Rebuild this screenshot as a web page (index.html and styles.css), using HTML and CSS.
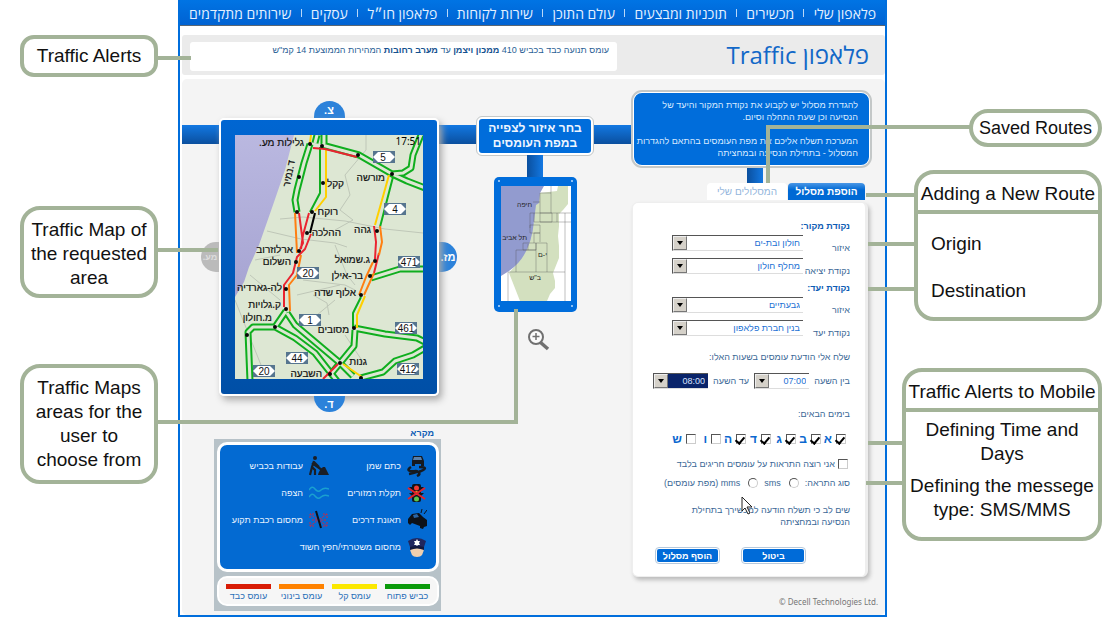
FILE: index.html
```html
<!DOCTYPE html>
<html lang="he">
<head>
<meta charset="utf-8">
<title>פלאפון Traffic</title>
<link rel="stylesheet" href="styles.css">
</head>
<body>
<div class="sheet">
  <aside class="notes notes-left" lang="en">
    <div class="note note-alerts">Traffic Alerts<i class="wire wire-alerts"></i></div>
    <div class="note note-map">Traffic Map of the requested area<i class="wire wire-map"></i></div>
    <div class="note note-areas">Traffic Maps areas for the user to choose from<i class="wire wire-areas"></i></div>
  </aside>

  <div class="app" dir="rtl">
    <nav class="nav">
      <a href="#">פלאפון שלי</a><i></i>
      <a href="#">מכשירים</a><i></i>
      <a href="#">תוכניות ומבצעים</a><i></i>
      <a href="#">עולם התוכן</a><i></i>
      <a href="#">שירות לקוחות</a><i></i>
      <a href="#">פלאפון חו״ל</a><i></i>
      <a href="#">עסקים</a><i></i>
      <a href="#">שירותים מתקדמים</a>
    </nav>
    <header class="titlebar">
      <h1>פלאפון Traffic</h1>
      <p class="ticker">עומס תנועה כבד בכביש 410 <b>ממכון ויצמן</b> עד <b>מערב רחובות</b> המהירות הממוצעת 14 קמ"ש</p>
    </header>

    <main class="panel">
      <section class="route-col">
        <div class="info-sign">
          <p>להגדרת מסלול יש לקבוע את נקודת המקור והיעד של<br>הנסיעה וכן שעת התחלה וסיום.</p>
          <p>המערכת תשלח אליכם את מפת העומסים בהתאם להגדרות<br>המסלול - בתחילת הנסיעה ובמחציתה</p>
        </div>
        <div class="post post-short"></div>
        <div class="tabs">
          <button type="button" class="tab tab-on">הוספת מסלול</button>
          <button type="button" class="tab">המסלולים שלי</button>
        </div>
        <form class="form">
          <h2>נקודת מקור:</h2>
          <div class="field"><label for="area1">איזור</label><span class="combo"><select id="area1"><option>חולון ובת-ים</option></select><i></i></span></div>
          <div class="field"><label for="exit">נקודת יציאה</label><span class="combo"><select id="exit"><option>מחלף חולון</option></select><i></i></span></div>
          <h2>נקודת יעד:</h2>
          <div class="field"><label for="area2">איזור</label><span class="combo"><select id="area2"><option>גבעתיים</option></select><i></i></span></div>
          <div class="field"><label for="dest">נקודת יעד</label><span class="combo"><select id="dest"><option>בנין חברת פלאפון</option></select><i></i></span></div>
          <p class="hint">שלח אלי הודעת עומסים בשעות האלו:</p>
          <div class="hours">
            <label for="from">בין השעה</label><span class="combo"><select id="from"><option>07:00</option></select><i></i></span>
            <label for="to">עד השעה</label><span class="combo combo-active"><select id="to"><option>08:00</option></select><i></i></span>
          </div>
          <p class="hint">בימים הבאים:</p>
          <div class="days">
            <label><input type="checkbox" checked>א</label>
            <label><input type="checkbox" checked>ב</label>
            <label><input type="checkbox" checked>ג</label>
            <label><input type="checkbox" checked>ד</label>
            <label><input type="checkbox" checked>ה</label>
            <label><input type="checkbox">ו</label>
            <label><input type="checkbox">ש</label>
          </div>
          <label class="only"><input type="checkbox">אני רוצה התראות על עומסים חריגים בלבד</label>
          <div class="kind">
            <span>סוג התראה:</span>
            <label><input type="radio" name="kind">sms</label>
            <label><input type="radio" name="kind">mms (מפת עומסים)</label>
          </div>
          <p class="remark">שים לב כי תשלח הודעה למכשירך בתחילת הנסיעה ובמחציתה</p>
          <div class="actions">
            <button type="button">ביטול</button>
            <button type="button">הוסף מסלול</button>
          </div>
          <svg class="pointer" viewBox="0 0 12 20" aria-hidden="true"><path d="M1 1v14l3-3 3 6 2-1-3-6h5z" fill="#fff" stroke="#222"/></svg>
        </form>
        <p class="copy" dir="ltr">© Decell Technologies Ltd.</p>
      </section>

      <section class="region-col">
        <h2 class="region-sign">בחר איזור לצפייה<br>במפת העומסים</h2>
        <div class="post"></div>
        <div class="region">
          <svg viewBox="0 0 70 115" role="img" aria-label="מפת איזורים">
            <rect width="70" height="115" fill="#fff"/>
            <path d="M39 7L56 5 57 0H67V18L62 24 58 28V40L57 50 58 60V72L52 87 54 95 54 102 49 108 46 115H19L8 87Q33 60 34 20Z" fill="#d3e0bf"/>
            <path d="M0 0H43L39 7 38 17 35 19 33 35Q30 70 8 85L0 90Z" fill="#929bcf"/>
            <path d="M50 0V7M39 7H50M39 7V27M50 7V27M32 16H39M29 27H70M29 27V42M33 27V36H70M39 27H51V36H39ZM56 27V36M29 39H39V47H29ZM33 47H39V56M22 57H35V64H22ZM15 64H35M15 64V86M33 47V57M35 57H46V86M35 57V86M7 86H64M64 27V115M7 86V115M27 64V58" fill="none" stroke="#555" stroke-opacity=".38"/>
            <g class="region-text"><text x="31" y="21">חיפה</text><text x="26" y="54">תל אביב</text><text x="46" y="71">י-ם</text><text x="40" y="94">ב"ש</text></g>
          </svg>
          <i class="screw s1"></i><i class="screw s2"></i><i class="screw s3"></i><i class="screw s4"></i>
        </div>
        <button type="button" class="zoom" aria-label="הגדלה"><svg viewBox="0 0 24 24"><circle cx="9" cy="9" r="7" fill="#fff" fill-opacity=".6" stroke="#707070" stroke-width="2"/><path d="M9 5v7M5.500 8.500h7" stroke="#707070" stroke-width="1.500"/><path d="M13 14l8 7" stroke="#707070" stroke-width="3.500"/></svg></button>
      </section>

      <section class="map-col">
        <button type="button" class="dir dir-n">צ.</button>
        <div class="map-row">
          <button type="button" class="dir dir-e">מז.</button>
          <div class="map-frame">
            <svg viewBox="0 0 188 244" role="img" aria-label="מפת עומסים">
              <defs><linearGradient id="sea" x2="0" y2="1"><stop stop-color="#bab8e0"/><stop offset="1" stop-color="#a6a4d2"/></linearGradient></defs>
              <rect width="188" height="244" fill="#dde7d3"/>
              <path d="M0 0H59L50 35 38 70 24 110 14 132 9 147 0 162Z" fill="url(#sea)"/>
              <path d="M131 0V15L110 40 115 60 105 75 118 85 100 95M45 84L68 82 110 86 150 94 188 98M32 96L66 104 100 108 112 112M20 125L45 120M15 140L45 165M68 145L110 150 120 155M100 110L112 140 120 150M62 160L105 150M78 160L92 168 94 180M0 165L30 240M110 200L130 230M70 190L100 165" fill="none" stroke="#bfc7b8"/>
              <g class="road">
                <path id="r1" d="M89 0V9M87 10L124 20 157 39 168 38 176 33 178 20 186 0M157 39L172 46 190 53M75 9L69 28 62 55 60 65 62 77M136 143L165 134H190M119 193L150 199 182 203 190 207M120 195L119 211 105 228 96 239M126 243L148 237 160 226 178 220 190 213M51 176L40 192 18 192 13 197 15 246M52 178L60 190 105 228 118 241M40 192L60 203 80 218 102 246M82 0L80 8"/>
              </g>
              <g class="road-in"><use href="#r1"/></g>
              <g class="lane">
                <path class="g" d="M85 12V58L75 77M158 42L145 92M126 162L118 178V193"/>
                <path class="y" d="M76 0L75 8M91 14V62L80 76M154 40L140 90M130 161L122 180V193M108 229L127 242"/>
                <path class="r" d="M78 13L90 14 122 22M64 78L68 108 65 114M74 78L68 100 66 114M76 99L70 114 62 122 58 138 49 150V172M139 91L141 107 140 124M103 229L88 244M144 118L139 138"/>
                <path class="o" d="M60 78L62 118M66 120L62 140 54 150 55 176M145 91L147 107 144 120M138 127L131 142 124 160M139 138L129 160"/>
                <path class="k" d="M80 78L75 98"/>
              </g>
              <g fill="#080808"><circle cx="75" cy="9" r="2"/><circle cx="87" cy="11" r="2"/><circle cx="123" cy="20" r="2"/><circle cx="157" cy="39" r="2"/><circle cx="64" cy="42" r="2"/><circle cx="88" cy="48" r="2"/><circle cx="62" cy="77" r="2"/><circle cx="77" cy="77" r="2"/><circle cx="72" cy="98" r="2"/><circle cx="64" cy="116" r="2"/><circle cx="142" cy="96" r="2"/><circle cx="61" cy="127" r="2"/><circle cx="51" cy="154" r="2"/><circle cx="51" cy="174" r="2"/><circle cx="40" cy="192" r="2"/><circle cx="12" cy="200" r="2"/><circle cx="140" cy="126" r="2"/><circle cx="135" cy="141" r="2"/><circle cx="126" cy="160" r="2"/><circle cx="119" cy="193" r="2"/><circle cx="105" cy="228" r="2"/><circle cx="95" cy="239" r="2"/><circle cx="126" cy="243" r="2"/></g>
              <defs><g id="shield"><rect x="-11" y="-6" width="22" height="12" fill="#56758f"/><path d="M-11 0L-6-5H6L11 0 6 5H-6Z" fill="#fff"/></g></defs>
              <g class="shields">
                <use href="#shield" x="149" y="22"/><text x="148" y="26">5</text>
                <use href="#shield" x="160" y="74"/><text x="160" y="78">4</text>
                <use href="#shield" x="174" y="127"/><text x="174" y="131">471</text>
                <use href="#shield" x="73" y="138"/><text x="73" y="142">20</text>
                <use href="#shield" x="75" y="185"/><text x="75" y="189">1</text>
                <use href="#shield" x="171" y="193"/><text x="171" y="197">461</text>
                <use href="#shield" x="62" y="223"/><text x="62" y="227">44</text>
                <use href="#shield" x="29" y="236"/><text x="29" y="240">20</text>
                <use href="#shield" x="173" y="234"/><text x="173" y="238">412</text>
              </g>
              <text class="clock" x="186" y="10">17:51</text>
              <g class="places">
                <text x="69" y="11">גלילות מע.</text><text transform="translate(60 26) rotate(-78)" x="0" y="0">ד.נמיר</text>
                <text x="109" y="52">קקל</text><text x="150" y="46">מורשה</text><text x="103" y="80">רוקח</text><text x="106" y="101">ההלכה</text><text x="136" y="98">גהה</text><text x="58" y="118">ארלוזרוב</text><text x="56" y="130">השלום</text><text x="135" y="128">ג.שמואל</text><text x="128" y="144">בר-אילן</text><text x="47" y="156">לה-גארדיה</text><text x="121" y="161">אלוף שדה</text><text x="46" y="173">ק.גלויות</text><text x="37" y="186">מ.חולון</text><text x="114" y="198">מסובים</text><text x="132" y="230">גנות</text><text x="87" y="242">השבעה</text>
              </g>
            </svg>
          </div>
          <button type="button" class="dir dir-w" disabled>מע.</button>
        </div>
        <button type="button" class="dir dir-s">ד.</button>

        <h2 class="legend-title">מקרא</h2>
        <div class="legend">
          <ul class="events">
            <li><svg viewBox="0 0 20 22"><path d="M6 1h9l2 5v5h-3V9H8v2H5V6z" fill="#161a20"/><path d="M7 2h7l1 3H6z" fill="#5a7fa8"/><path d="M4 12C-1 15 2 17 9 16 13 16 8 18 2 19M12 12C20 12 19 14 14 16 8 18 16 18 10 21" fill="none" stroke="#161a20" stroke-width="2.500"/></svg>כתם שמן</li>
            <li><svg viewBox="0 0 20 22"><circle cx="6" cy="3" r="2" fill="#1a1e26"/><path d="M5 6L3 12 6 15V20M3 12L1 20M5 7L10 12M3 8L13 15" fill="none" stroke="#1a1e26" stroke-width="2.200"/><path d="M9 20q1-5 5-8h2l4 8z" fill="#1a1e26"/></svg>עבודות בכביש</li>
            <li><svg viewBox="0 0 20 22"><rect x="5" y="2" width="9" height="18" rx="2" fill="#10151c"/><path d="M2 5h3v3zM2 11h3v3zM17 5h-3v3zM17 11h-3v3z" fill="#10151c"/><circle cx="9.500" cy="6" r="2.500" fill="#f03b33"/><circle cx="9.500" cy="11" r="2" fill="#eda01f"/><circle cx="9.500" cy="17" r="2.500" fill="#5ec54a"/><path d="M1 6l17 11M1 17L18 6" stroke="#e3222b" stroke-width="2"/></svg>תקלת רמזורים</li>
            <li><svg viewBox="0 0 20 22"><path d="M0 8q3-5 6-1t6 1 8-1M0 15q3-5 6-1t6 1 8-1" fill="none" stroke="#1aa0d0" stroke-width="1.500"/></svg>הצפה</li>
            <li><svg viewBox="0 0 20 22"><path d="M1 10l4-5 7-1 4 4 4 3v6l-3 1-1 2-3-1v-2l-8-3-2 2-2-2z" fill="#0d1118"/><path d="M6 6l4-1 2 3-5 1z" fill="#2b65a5"/><path d="M14 4l1-4M17 5l3-4" stroke="#0d1118"/></svg>תאונת דרכים</li>
            <li><svg viewBox="0 0 20 22"><path d="M1 5l17 12M1 17L18 5M3 11h14M1 9V5h4M14 5h4v4M1 13v4h4M14 17h4v-4" fill="none" stroke="#cf263f" stroke-dasharray="2 1"/><path d="M7 2l5 17" stroke="#0d1118" stroke-width="2"/></svg>מחסום רכבת תקוע</li>
            <li class="wide"><svg viewBox="0 0 20 22"><path d="M3 11h14q0 10-7 10T3 11z" fill="#f0cfae"/><path d="M1 5q9-6 18 0l-2 6H3z" fill="#20275f"/><path d="M3 11q7-2 14 0v3q-7-3-14 0z" fill="#12183d"/><path d="M10 3l1 2 2 0-1 2 1 2-2 0-1 1-1-1-2 0 1-2-1-2 2 0z" fill="#fff"/></svg>מחסום משטרתי/חפץ חשוד</li>
          </ul>
          <ul class="loads">
            <li class="open">כביש פתוח</li><li class="light">עומס קל</li><li class="mid">עומס בינוני</li><li class="heavy">עומס כבד</li>
          </ul>
        </div>
      </section>
    </main>
  </div>

  <aside class="notes notes-right" lang="en">
    <div class="note note-saved">Saved Routes<i class="wire wire-saved"></i></div>
    <div class="note group group-route">
      <h3>Adding a New Route</h3>
      <p>Origin</p>
      <p>Destination</p>
      <i class="wire wire-head"></i><i class="wire wire-origin"></i><i class="wire wire-dest"></i>
    </div>
    <div class="note group group-mobile">
      <h3>Traffic Alerts to Mobile</h3>
      <p>Defining Time and Days</p>
      <p>Defining the messege type: SMS/MMS</p>
      <i class="wire wire-days"></i><i class="wire wire-type"></i>
    </div>
  </aside>
</div>
</body>
</html>
```
FILE: styles.css
```css
* { box-sizing: border-box; }
body { margin: 0; background: #fff; font-family: "Liberation Sans", Arial, sans-serif; font-size: 9px; }
h1, h2, h3, p, ul { margin: 0; padding: 0; font-weight: normal; }
ul { list-style: none; }
button, select, input { font: inherit; margin: 0; }
button { padding: 0; border: 0; cursor: pointer; }
svg { display: block; }

.sheet { display: grid; grid-template-columns: 178px minmax(709px, 1fr) 229px; min-height: 100vh; }

/* Callouts */
.notes { display: flex; flex-direction: column; color: #111; }
.notes-left { padding: 35px 0 0 20px; align-items: flex-start; }
.notes-right { padding: 109px 14px 0 0; align-items: flex-end; }
.note { position: relative; z-index: 2; border: 4px solid #a3b398; border-radius: 20px; background: #fff; font-size: 19px; line-height: 24px; text-align: center; }
.notes-left .note { width: 138px; }
.note-alerts { padding: 5px 0; border-radius: 14px; }
.note-map { margin-top: 129px; padding: 8px 0 4px; }
.note-areas { margin-top: 66px; padding: 8px 8px; }
.note-saved { width: 133px; padding: 3px 0; font-size: 18px; }
.group h3 { font-size: 19px; line-height: 24px; padding: 8px 0 4px; border-bottom: 4px solid #a3b398; }
.group-route { width: 188px; margin-top: 23px; padding-bottom: 14px; }
.group-route p { padding: 18px 13px 0; text-align: left; }
.group-route p + p { padding-top: 23px; }
.group-mobile { width: 200px; margin-top: 47px; padding-bottom: 13px; }
.group-mobile p { padding: 6px 2px 2px; }
.wire { position: absolute; height: 4px; background: #a3b398; }
.notes-left .wire { left: 100%; }
.notes-right .wire { right: 100%; }
.wire-alerts { top: 17px; width: 37px; }
.wire-map { top: 38px; width: 64px; }
.notes-left .wire-areas { bottom: 56px; left: 100%; width: 364px; height: 115px; background: none; border: solid #a3b398; border-width: 0 4px 4px 0; }
.wire-saved { top: 12px; width: 207px; }
.wire-saved::before { content: ""; position: absolute; left: 0; top: 0; width: 4px; height: 58px; background: #a3b398; }
.wire-head { top: 19px; width: 52px; }
.wire-origin { top: 68px; width: 50px; }
.wire-dest { top: 113px; width: 50px; }
.wire-days { top: 69px; width: 38px; }
.wire-type { top: 109px; width: 40px; }

/* Application window */
.app { border: solid #006edc; border-width: 0 2px 2px; background: #fff; display: flex; flex-direction: column; }
.nav { display: flex; align-items: center; justify-content: space-between; height: 26px; padding: 1px 9px 0; background: linear-gradient(#0074e4, #0062d2); border-bottom: 1px solid #5a6672; font-family: "Open Sans", "Liberation Sans", sans-serif; font-size: 14px; }
.nav a { color: #e4f0ff; text-decoration: none; white-space: nowrap; }
.nav i { width: 1px; height: 8px; background: #b9d7f8; }
.titlebar { display: flex; justify-content: space-between; margin: 9px 0 4px 2px; padding: 7px 16px 4px 8px; background: #ebebeb; border-radius: 3px; }
.titlebar h1 { color: #1268c8; font-family: "Open Sans", "Liberation Sans", sans-serif; font-size: 24px; line-height: 26px; }
.ticker { width: 427px; height: 29px; padding: 1px 8px; border-radius: 3px; background: #fff; color: #2b5f96; line-height: 14px; }
.ticker b { color: #14518f; }

.panel { flex: 1; display: grid; grid-template-columns: 239px 1fr 256px; padding: 12px 14px 4px 19px; margin-left: 2px; border-radius: 5px; background: linear-gradient(#1378e2, #0a4f9e) 0 46px / calc(100% - 240px) 19px no-repeat, #f4f4f4; }

.post { width: 16px; height: 22px; background: linear-gradient(90deg, #0a4f9e, #1378e2); }
.post-short { height: 16px; margin-right: 108px; }

/* Route column */
.info-sign { border: 2px solid #fff; outline: 2px solid #c4c8c8; outline-offset: -1px; border-radius: 10px; background: #006ddb; color: #d9eaff; padding: 6px 11px 6px 4px; line-height: 12px; white-space: nowrap; }
.info-sign p + p { margin-top: 12px; }
.tabs { display: flex; gap: 1px; padding-right: 6px; }
.tab { height: 17px; width: 80px; border-radius: 4px 4px 0 0; background: #fff; color: #94b6dc; font-size: 10px; }
.tab-on { width: 77px; background: linear-gradient(#4a97e6, #0069d4 40%); color: #fff; font-weight: bold; }
.form { position: relative; width: 236px; margin: 2px 3px 0 0; padding: 16px 15px 12px 20px; border: 3px solid #eee; border-width: 1px 3px 1px 1px; border-radius: 6px; background: #fff; box-shadow: 2px 3px 4px #bbb; color: #3a6896; line-height: 14px; white-space: nowrap; }
.form h2 { color: #0d5cb4; font-size: 9px; font-weight: bold; line-height: 14px; }
.field { display: flex; justify-content: space-between; align-items: flex-start; height: 23px; padding-left: 19px; }
.field + h2 { margin-top: 2px; }
.field label { padding-top: 8px; }
.field .combo { width: 131px; margin-top: 2px; }
.combo { position: relative; display: block; }
.combo select { display: block; width: 100%; height: 16px; padding: 0 3px 0 16px; appearance: none; border: solid #555; border-width: 1px 0 1px 1px; border-bottom-color: #ddd; border-radius: 0; background: #fff; color: #1a70d4; }
.combo i { position: absolute; left: 1px; top: 1px; width: 14px; height: 14px; border: 1px solid; border-color: #eee #777 #777 #eee; background: #d5d1c9; pointer-events: none; }
.combo i::after { content: ""; position: absolute; left: 3px; top: 4px; border: 3px solid transparent; border-top: 4px solid #000; border-bottom: 0; }
.hours { display: flex; align-items: center; justify-content: space-between; margin-top: 9px; }
.hours .combo { width: 55px; }
.combo-active select { background: #0a246a; color: #dbe4ff; outline: 0; }
.hint { margin-top: 9px; }
.hours + .hint { margin-top: 18px; }
.days { display: flex; margin-top: 11px; padding-right: 4px; color: #0b68cf; font-size: 12px; font-weight: bold; }
.days label { display: flex; align-items: center; gap: 4px; width: 25px; }
input { appearance: none; flex: none; width: 10px; height: 10px; border: 1px solid; border-color: #555 #ccc #ccc #555; background: #fff; }
input[type=checkbox]:checked::after { content: ""; display: block; width: 4px; height: 7px; margin: 0 2px 0 0; border: solid #000; border-width: 0 2px 2px 0; transform: rotate(40deg); }
input[type=radio] { border-radius: 50%; }
.only { display: flex; align-items: center; gap: 3px; margin-top: 11px; padding-right: 2px; }
.kind { display: flex; justify-content: flex-start; gap: 6px; margin-top: 5px; }
.kind label { display: flex; align-items: center; gap: 8px; }
.remark { margin-top: 14px; padding-left: 20px; line-height: 12px; white-space: normal; }
.actions { display: flex; justify-content: space-between; margin-top: 19px; padding: 0 44px 0 2px; }
.actions button { width: 65px; height: 17px; border: 2px solid #fff; outline: 1px solid #b5c8dc; outline-offset: -1px; border-radius: 4px; background: #006bd8; color: #fff; font-weight: bold; }
.pointer { position: absolute; left: 108px; top: 293px; width: 12px; height: 20px; }
.copy { margin-top: 18px; padding-left: 147px; color: #777; font-family: "Noto Sans", sans-serif; font-size: 8px; line-height: 14px; white-space: nowrap; }

/* Region column */
.region-col { justify-self: end; margin-left: 20px; width: 116px; padding-top: 26px; display: flex; flex-direction: column; align-items: center; }
.region-sign { width: 116px; padding: 2px 0; border: 2px solid #fff; outline: 1px solid #c4c8c8; border-radius: 5px; background: #006ddb; color: #eef5ff; font-size: 12px; font-weight: bold; line-height: 15px; text-align: center; }
.region { position: relative; width: 83px; padding: 9px 6px 11px 7px; border-radius: 5px; background: #006ddb; }
.region svg { width: 100%; }
.region-text { font-size: 7px; fill: #222; direction: rtl; }
.screw { position: absolute; width: 2px; height: 2px; border-radius: 50%; background: #b8dcff; }
.s1 { left: 4px; top: 3px; } .s2 { right: 4px; top: 3px; } .s3 { left: 4px; bottom: 5px; } .s4 { right: 4px; bottom: 5px; }
.zoom { margin: 16px 0 0 8px; width: 24px; height: 24px; background: none; }

/* Map column */
.map-col { display: flex; flex-direction: column; align-items: center; padding-top: 10px; }
.dir { background: #2c82da; color: #fff; font-size: 11px; font-weight: bold; }
.dir-n { width: 31px; height: 17px; border-radius: 16px 16px 0 0; }
.dir-s { width: 31px; height: 16px; border-radius: 0 0 16px 16px; }
.dir-e { width: 18px; height: 30px; border-radius: 0 15px 15px 0; }
.dir-w { width: 18px; height: 30px; border-radius: 15px 0 0 15px; background: #bbb; color: #ddd; font-size: 9px; }
.map-row { display: flex; align-items: center; align-self: stretch; }
.map-frame { flex: 1; padding: 15px 14px; border: 2px solid #fff; border-radius: 5px; background: linear-gradient(#0066d2, #004fa6); box-shadow: 3px 4px 7px #aaa; }
.map-frame svg { width: 100%; }
.road, .road-in, .lane { fill: none; stroke-linejoin: round; }
.road { stroke: #0fae1e; stroke-width: 7; }
.road-in { stroke: #dde7d3; stroke-width: 3; }
.lane { stroke-width: 2; }
.g { stroke: #0fae1e; } .y { stroke: #ffd000; } .r { stroke: #ea2430; } .o { stroke: #ff7f11; } .k { stroke: #000; }
.shields { font-size: 10px; text-anchor: middle; fill: #111; }
.clock { direction: ltr; font-family: "Noto Sans", sans-serif; font-size: 10px; text-anchor: end; }
.places { direction: rtl; font-size: 10px; fill: #111; stroke: #111; stroke-width: .2; }

.legend-title { align-self: stretch; margin: 15px 23px 0 0; color: #0d5cb4; font-size: 9px; font-weight: bold; line-height: 12px; }
.legend { align-self: flex-end; width: 227px; margin-left: 13px; padding: 3px 2px 5px 3px; background: #b7c2c8; }
.events { display: grid; grid-template-columns: 98px 1fr; grid-auto-rows: 27px; padding: 7px 9px 9px; border: 3px solid #fff; border-radius: 10px; background: #036ad2; color: #eaf3ff; }
.events li { display: flex; align-items: center; gap: 6px; white-space: nowrap; }
.events svg { flex: none; width: 20px; height: 22px; }
.events .wide { grid-column: span 2; }
.loads { display: grid; grid-template-columns: repeat(4, 1fr); gap: 8px; margin-top: 4px; padding: 6px 7px 1px; border: 2px solid #fff; border-radius: 10px; background: #f6f6f6; color: #2a70b8; text-align: center; line-height: 14px; white-space: nowrap; }
.loads li { border-top: 5px solid; }
.loads .open { border-color: #0a9a0a; }
.loads .light { border-color: #fbe800; }
.loads .mid { border-color: #ff8200; }
.loads .heavy { border-color: #d81c06; }
```
